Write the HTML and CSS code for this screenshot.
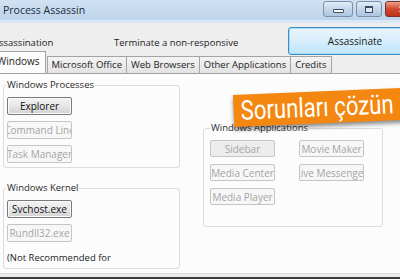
FILE: index.html
```html
<!DOCTYPE html>
<html lang="en">
<head>
    <meta charset="UTF-8">
    <meta name="viewport" content="width=device-width, initial-scale=1.0">
    <title>Process Assassin</title>
    <link rel="stylesheet" href="styles.css">
</head>
<body>
    <div class="window">
        <div class="titlebar">
            <span class="title">Process Assassin</span>
            <div class="controls">
                <span class="ctl min"><i class="glyph-min"></i></span>
                <span class="ctl max"><i class="glyph-max"></i></span>
                <span class="ctl close">&#x2715;</span>
            </div>
        </div>
        <div class="frame-line"></div>

        <div class="toolbar">
            <span class="mode">Assassination</span>
            <span class="hint">Terminate a non-responsive</span>
            <button type="button" class="assassinate">Assassinate</button>
        </div>

        <div class="tabs">
            <span class="tab active">Windows</span>
            <span class="tab">Microsoft Office</span>
            <span class="tab">Web Browsers</span>
            <span class="tab">Other Applications</span>
            <span class="tab">Credits</span>
        </div>

        <div class="panel">
            <div class="col">
                <fieldset class="group">
                    <legend>Windows Processes</legend>
                    <button type="button" class="btn">Explorer</button>
                    <button type="button" class="btn" disabled>Command Line</button>
                    <button type="button" class="btn" disabled>Task Manager</button>
                </fieldset>
                <fieldset class="group kernel">
                    <legend>Windows Kernel</legend>
                    <button type="button" class="btn">Svchost.exe</button>
                    <button type="button" class="btn" disabled>Rundll32.exe</button>
                    <p class="note">(Not Recommended for</p>
                </fieldset>
            </div>
            <div class="col">
                <fieldset class="group apps">
                    <legend>Windows Applications</legend>
                    <div class="app-grid">
                        <button type="button" class="btn shaded" disabled>Sidebar</button>
                        <button type="button" class="btn" disabled>Movie Maker</button>
                        <button type="button" class="btn" disabled>Media Center</button>
                        <button type="button" class="btn" disabled>Live Messenger</button>
                        <button type="button" class="btn" disabled>Media Player</button>
                    </div>
                </fieldset>
            </div>
        </div>
        <div class="status"></div>
    </div>

    <div class="banner"><span>Sorunları çözün</span></div>
</body>
</html>
```

FILE: styles.css
```css
* {
    box-sizing: border-box;
}
html, body {
    margin: 0;
    overflow: hidden;
}
body {
    width: 400px;
    height: 279px;
    position: relative;
    font-family: "Open Sans", "Segoe UI", sans-serif;
    font-size: 9.5px;
    color: #222;
    background: #eeeeee;
}
.window {
    display: flex;
    flex-direction: column;
    height: 279px;
}

/* title bar */
.titlebar {
    height: 20px;
    display: flex;
    align-items: flex-start;
    background: linear-gradient(#d0e1f2, #bed4ea);
}
.title {
    flex: 1;
    padding: 3px 0 0 3px;
    font-size: 10.5px;
    color: #1c2b3c;
}
.controls {
    display: flex;
    gap: 3px;
    margin-right: -30px;
    padding-top: 1px;
}
.ctl {
    height: 16px;
    border: 1px solid #7a8fa8;
    border-radius: 3px;
    background: linear-gradient(#e3edf7, #c4d6ea 50%, #aec6e0);
    display: flex;
    align-items: center;
    justify-content: center;
}
.min {
    width: 30px;
}
.max {
    width: 26px;
}
.close {
    width: 45px;
    border-color: #7a3024;
    background: linear-gradient(#eba08d, #cf4a2e 50%, #bb3118);
    color: #fff;
    font-size: 10px;
    justify-content: flex-start;
    padding-left: 12px;
}
.glyph-min {
    display: block;
    width: 11px;
    height: 4px;
    margin-top: 3px;
    border: 1px solid #3b4a5e;
    background: #fff;
    border-radius: 1px;
}
.glyph-max {
    display: block;
    width: 8px;
    height: 7px;
    border: 1px solid #3b4a5e;
    border-top-width: 2px;
    background: #dfe8f2;
}
.frame-line {
    height: 3px;
    background: #d9e8f5;
}

/* top row */
.toolbar {
    height: 33px;
    display: flex;
    align-items: flex-start;
    padding-top: 4px;
}
.mode {
    width: 121px;
    margin-left: -7px;
    margin-top: 9px;
}
.hint {
    margin-top: 9px;
}
.assassinate {
    margin-left: auto;
    margin-right: -22px;
    width: 134px;
    height: 28px;
    font: inherit;
    font-size: 10px;
    color: #1a1a1a;
    border: 1px solid #3c8fcb;
    border-radius: 3px;
    background: linear-gradient(#eaf6fd, #d7eefb 50%, #bee6fd);
    box-shadow: inset 0 0 0 1px #a8dbf7;
}

/* tabs */
.tabs {
    height: 17px;
    display: flex;
    align-items: flex-end;
    position: relative;
    z-index: 1;
}
.tab {
    height: 17px;
    padding: 1px 4px 0;
    margin-right: -1px;
    border: 1px solid #a3a3a3;
    border-bottom: none;
    background: linear-gradient(#f4f4f4, #e3e3e3);
    white-space: nowrap;
}
.tab.active {
    height: 22px;
    margin-left: -8px;
    margin-right: 1px;
    padding: 2px 5px 0 4px;
    background: #fcfcfc;
    font-size: 10px;
}

/* tab page */
.panel {
    flex: 1;
    display: grid;
    grid-template-columns: 177px 180px;
    column-gap: 23px;
    align-items: start;
    padding: 4px 0 0 3px;
    background: #fcfcfc;
    border-top: 1px solid #a3a3a3;
    border-bottom: 1px solid #dadada;
}
.col {
    display: flex;
    flex-direction: column;
}
.group {
    margin: 0;
    padding: 5px 4px 4px 3px;
    border: 1px solid #dcdcdc;
    border-radius: 3px;
    display: flex;
    flex-direction: column;
    gap: 6px;
}
.group legend {
    padding: 0 1px;
    margin-left: -1px;
    line-height: 14px;
    color: #2a2a2a;
}
.kernel {
    margin-top: 13px;
    padding-bottom: 3px;
}
.note {
    margin: 3px 0 0;
    line-height: 14px;
    color: #1e1e1e;
    white-space: nowrap;
}
.apps {
    margin-top: 43px;
    padding: 5px 4px 21px 6px;
}
.apps legend {
    margin-left: 0;
}
.app-grid {
    display: grid;
    grid-template-columns: 65px 65px;
    column-gap: 24px;
    row-gap: 7px;
}
.apps .btn {
    height: 17px;
}

.btn {
    width: 65px;
    height: 18px;
    padding: 0;
    display: flex;
    align-items: center;
    justify-content: center;
    overflow: hidden;
    white-space: nowrap;
    font: inherit;
    font-size: 10px;
    color: #111;
    border: 1px solid #7a7a7a;
    border-radius: 2px;
    background: linear-gradient(#f3f3f3, #e6e6e6 50%, #d2d2d2);
    box-shadow: inset 0 0 0 1px #fafafa;
}
.btn:disabled {
    color: #a5a5a5;
    border-color: #c5c5c5;
    background: #f7f7f7;
    box-shadow: none;
}
.btn.shaded {
    background: #ededed;
}

.status {
    height: 5px;
    background: #ececec;
    border-bottom: 2px solid #3b3b3b;
}

/* overlay caption */
.banner {
    position: absolute;
    left: 233px;
    top: 95px;
    width: 180px;
    height: 32px;
    padding-left: 7px;
    background: #f4870f;
    color: #fff;
    font-family: Roboto, "Open Sans", sans-serif;
    font-size: 27px;
    line-height: 32px;
    white-space: nowrap;
    transform: rotate(-2.4deg);
    transform-origin: left top;
    box-shadow: 0 3px 4px rgba(0, 0, 0, 0.45);
}
.banner span {
    display: inline-block;
    transform: scaleX(0.82);
    transform-origin: left center;
}
```
